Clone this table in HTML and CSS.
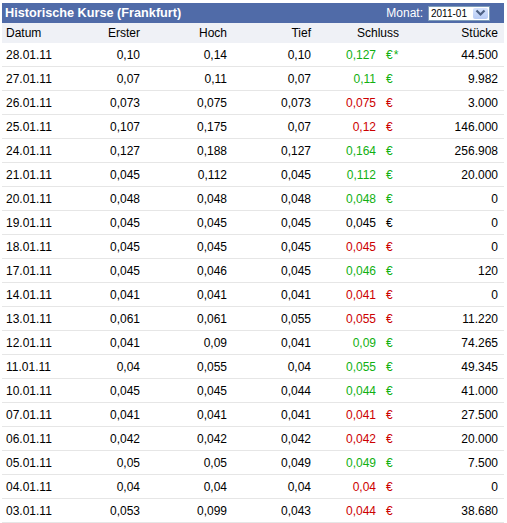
FILE: index.html
```html
<!DOCTYPE html>
<html lang="de">
<head>
<meta charset="utf-8">
<title>Historische Kurse (Frankfurt)</title>
<link rel="stylesheet" href="styles.css">
</head>
<body>
<div class="box">
  <div class="titlebar">
    <span class="title">Historische Kurse (Frankfurt)</span>
    <div class="month">
      <span class="month-label">Monat:</span>
      <div class="select">
        <span class="select-value">2011-01</span>
        <span class="select-btn">
          <svg width="11" height="8" viewBox="0 0 11 8"><path d="M1.5 1.5 L5.5 5.5 L9.5 1.5" fill="none" stroke="#4d6185" stroke-width="2.2"/></svg>
        </span>
      </div>
    </div>
  </div>
  <div class="row head">
    <span class="c-date">Datum</span>
    <span class="num">Erster</span>
    <span class="num">Hoch</span>
    <span class="num">Tief</span>
    <span class="num schluss-head">Schluss</span>
    <span class="num">Stücke</span>
  </div>
  <div class="row"><span class="c-date">28.01.11</span><span class="num">0,10</span><span class="num">0,14</span><span class="num">0,10</span><span class="num up">0,127</span><span class="eur up">€<span class="star">*</span></span><span class="num">44.500</span></div>
  <div class="row"><span class="c-date">27.01.11</span><span class="num">0,07</span><span class="num">0,11</span><span class="num">0,07</span><span class="num up">0,11</span><span class="eur up">€</span><span class="num">9.982</span></div>
  <div class="row"><span class="c-date">26.01.11</span><span class="num">0,073</span><span class="num">0,075</span><span class="num">0,073</span><span class="num down">0,075</span><span class="eur down">€</span><span class="num">3.000</span></div>
  <div class="row"><span class="c-date">25.01.11</span><span class="num">0,107</span><span class="num">0,175</span><span class="num">0,07</span><span class="num down">0,12</span><span class="eur down">€</span><span class="num">146.000</span></div>
  <div class="row"><span class="c-date">24.01.11</span><span class="num">0,127</span><span class="num">0,188</span><span class="num">0,127</span><span class="num up">0,164</span><span class="eur up">€</span><span class="num">256.908</span></div>
  <div class="row"><span class="c-date">21.01.11</span><span class="num">0,045</span><span class="num">0,112</span><span class="num">0,045</span><span class="num up">0,112</span><span class="eur up">€</span><span class="num">20.000</span></div>
  <div class="row"><span class="c-date">20.01.11</span><span class="num">0,048</span><span class="num">0,048</span><span class="num">0,048</span><span class="num up">0,048</span><span class="eur up">€</span><span class="num">0</span></div>
  <div class="row"><span class="c-date">19.01.11</span><span class="num">0,045</span><span class="num">0,045</span><span class="num">0,045</span><span class="num">0,045</span><span class="eur">€</span><span class="num">0</span></div>
  <div class="row"><span class="c-date">18.01.11</span><span class="num">0,045</span><span class="num">0,045</span><span class="num">0,045</span><span class="num down">0,045</span><span class="eur down">€</span><span class="num">0</span></div>
  <div class="row"><span class="c-date">17.01.11</span><span class="num">0,045</span><span class="num">0,046</span><span class="num">0,045</span><span class="num up">0,046</span><span class="eur up">€</span><span class="num">120</span></div>
  <div class="row"><span class="c-date">14.01.11</span><span class="num">0,041</span><span class="num">0,041</span><span class="num">0,041</span><span class="num down">0,041</span><span class="eur down">€</span><span class="num">0</span></div>
  <div class="row"><span class="c-date">13.01.11</span><span class="num">0,061</span><span class="num">0,061</span><span class="num">0,055</span><span class="num down">0,055</span><span class="eur down">€</span><span class="num">11.220</span></div>
  <div class="row"><span class="c-date">12.01.11</span><span class="num">0,041</span><span class="num">0,09</span><span class="num">0,041</span><span class="num up">0,09</span><span class="eur up">€</span><span class="num">74.265</span></div>
  <div class="row"><span class="c-date">11.01.11</span><span class="num">0,04</span><span class="num">0,055</span><span class="num">0,04</span><span class="num up">0,055</span><span class="eur up">€</span><span class="num">49.345</span></div>
  <div class="row"><span class="c-date">10.01.11</span><span class="num">0,045</span><span class="num">0,045</span><span class="num">0,044</span><span class="num up">0,044</span><span class="eur up">€</span><span class="num">41.000</span></div>
  <div class="row"><span class="c-date">07.01.11</span><span class="num">0,041</span><span class="num">0,041</span><span class="num">0,041</span><span class="num down">0,041</span><span class="eur down">€</span><span class="num">27.500</span></div>
  <div class="row"><span class="c-date">06.01.11</span><span class="num">0,042</span><span class="num">0,042</span><span class="num">0,042</span><span class="num down">0,042</span><span class="eur down">€</span><span class="num">20.000</span></div>
  <div class="row"><span class="c-date">05.01.11</span><span class="num">0,05</span><span class="num">0,05</span><span class="num">0,049</span><span class="num up">0,049</span><span class="eur up">€</span><span class="num">7.500</span></div>
  <div class="row"><span class="c-date">04.01.11</span><span class="num">0,04</span><span class="num">0,04</span><span class="num">0,04</span><span class="num down">0,04</span><span class="eur down">€</span><span class="num">0</span></div>
  <div class="row"><span class="c-date">03.01.11</span><span class="num">0,053</span><span class="num">0,099</span><span class="num">0,043</span><span class="num down">0,044</span><span class="eur down">€</span><span class="num">38.680</span></div>
</div>
</body>
</html>
```
FILE: styles.css
```css
html, body {
  margin: 0;
  padding: 0;
  background: #ffffff;
}
body {
  font-family: "Liberation Sans", Arial, sans-serif;
  font-size: 12px;
  color: #000;
}
.box {
  margin: 3px 3px 0 2px;
  width: 502px;
}
.titlebar {
  height: 20px;
  background: #506ba8;
  display: flex;
  align-items: center;
  justify-content: space-between;
  padding: 0 14px 0 3px;
}
.title {
  color: #fff;
  font-weight: bold;
  font-size: 12.7px;
}
.month {
  display: flex;
  align-items: center;
  gap: 5px;
}
.month-label {
  color: #fff;
  font-size: 12px;
}
.select {
  width: 57px;
  height: 13px;
  border: 1px solid #7f9db9;
  background: #fff;
  display: flex;
  align-items: center;
  justify-content: space-between;
  padding: 0 1px 0 2px;
}
.select-value {
  font-size: 10px;
  font-family: "Liberation Sans", Arial, sans-serif;
}
.select-btn {
  width: 15px;
  height: 11px;
  background: linear-gradient(#d6e3fd, #b7cbf5);
  border-radius: 2px;
  display: flex;
  align-items: center;
  justify-content: center;
}
.row {
  display: grid;
  grid-template-columns: 74px 60px 87px 84px 65px 24px 98px;
  align-items: center;
  height: 23px;
  padding: 0 6px 0 4px;
  border-bottom: 1px solid #e6e6e6;
}
.row.head {
  height: 20px;
  background: #eff1f6;
  border-bottom: none;
}
.num {
  text-align: right;
}
.schluss-head {
  grid-column: span 2;
  padding-right: 1px;
}
.eur {
  padding-left: 10px;
  white-space: nowrap;
}
.up { color: #11b011; }
.down { color: #cc0000; }
.star {
  padding-left: 1px;
}
```
